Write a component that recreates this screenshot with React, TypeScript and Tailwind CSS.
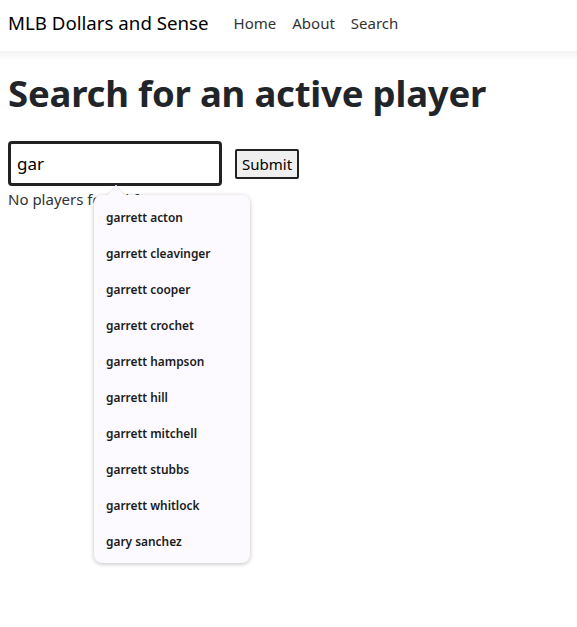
import React from "react";

const names = [
  "garrett acton",
  "garrett cleavinger",
  "garrett cooper",
  "garrett crochet",
  "garrett hampson",
  "garrett hill",
  "garrett mitchell",
  "garrett stubbs",
  "garrett whitlock",
  "gary sanchez",
];

export default function App() {
  return (
    <div className="min-h-[627px] bg-white text-[#212529]" style={{ fontFamily: '"Noto Sans", "Open Sans", sans-serif' }}>
      <nav className="relative flex h-[52px] items-center border-b border-[#dee2e6] bg-white px-2 pb-[5px]">
        <span className="mr-[25px] text-[18.7px] text-black">MLB Dollars and Sense</span>
        <div className="flex gap-[16px] text-[15px] text-[#333]">
          <span>Home</span>
          <span>About</span>
          <span>Search</span>
        </div>
        <div className="absolute left-0 right-0 top-full h-[10px] bg-gradient-to-b from-[#f3f3f3] to-white" />
      </nav>
      <main className="relative px-2">
        <h1 className="mt-[18px] text-[36.5px] font-bold leading-[1.3] tracking-[-0.2px]">Search for an active player</h1>
        <div className="mt-[24px] flex items-center gap-[13px]">
          <div className="flex h-[45px] w-[214px] items-center rounded-[4px] border-[3px] border-[#222] px-[6px] text-[17px] text-black">
            gar
          </div>
          <button className="h-[30px] rounded-[2px] border-2 border-[#222] bg-[#efefef] px-[5px] text-[15px] text-black">
            Submit
          </button>
        </div>
        <p className="mt-[2px] text-[15px] text-[#333]">No players found for gar</p>
        <div className="absolute left-[94px] top-[125px] w-[156px]">
          <div className="absolute -top-[7px] left-[15px] h-[14px] w-[14px] rotate-45 border-l border-t border-[#ebe8f0] bg-[#fcfaff]" />
          <div className="relative rounded-[8px] bg-[#fcfaff] py-[4px] shadow-[0_1px_4px_rgba(0,0,0,0.25)]">
            {names.map((n) => (
              <div key={n} className="flex h-[36px] items-center px-[12px] pt-[1px] text-[11.9px] font-semibold text-[#1a1a1a]">
                {n}
              </div>
            ))}
          </div>
          <div className="absolute -top-[6px] left-[16px] h-[12px] w-[12px] rotate-45 bg-[#fcfaff]" />
        </div>
      </main>
    </div>
  );
}
